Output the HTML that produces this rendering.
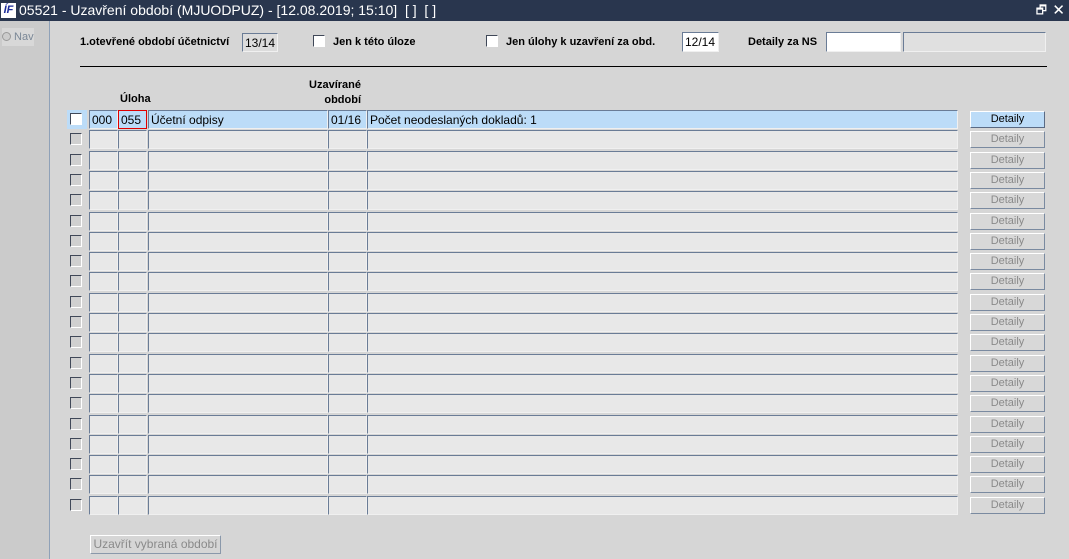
<!DOCTYPE html>
<html><head><meta charset="utf-8"><style>
*{box-sizing:border-box;margin:0;padding:0}
body{width:1069px;height:559px;overflow:hidden;background:#d6d6d6;font-family:"Liberation Sans",Arial,sans-serif;font-size:11px;color:#000;position:relative}
.a{position:absolute}
#title{left:0;top:0;width:1069px;height:21px;background:#29364e;color:#fff;font-size:14px;line-height:21px}
#left{left:0;top:21px;width:50px;height:538px;background:#cbcbcb;border-right:1px solid #8fa1b8}
.f{position:absolute;height:19px;background:#e8e8e8;border:1px solid;border-color:#6a7c96 #f0f0f0 #f0f0f0 #6a7c96;line-height:18px;padding-left:2px;white-space:nowrap;overflow:hidden;font-size:12px}
.s .f{background:#bcdcf8}
.cb{position:absolute;left:70px;width:12px;height:12px;background:#d0d0d0;border:1px solid;border-color:#404858 #fff #fff #404858;top:3px}
.s .cb{background:#fff}
.btn{position:absolute;left:970px;width:75px;height:17px;border:1px solid;border-color:#fff #7a8aa0 #7a8aa0 #fff;background:#d8d8d8;color:#8a8a8a;text-align:center;line-height:15px;top:1px}
.s .btn{background:#bcdcf8;color:#000;border-color:#fff #5a6a84 #5a6a84 #fff}
.r{position:absolute;left:0;width:1069px;height:20px}
.b{font-weight:bold}
</style></head><body>
<div id="title" class="a"><span style="position:absolute;left:1px;top:3px;width:15px;height:15px;background:#fff;color:#1a2a9a;font-size:11px;font-weight:bold;font-style:italic;line-height:15px;text-align:center">ÍF</span><span style="position:absolute;left:19px">05521 - Uzavření období (MJUODPUZ) - [12.08.2019; 15:10]&nbsp; [ ]&nbsp; [ ]</span><span style="position:absolute;right:22px;font-size:12px">🗗</span><span style="position:absolute;right:4px;font-size:15px">✕</span></div>
<div id="left" class="a"><div class="a" style="left:2px;top:7px;width:32px;height:18px;background:#d8d8d8;color:#7a8796;font-size:11px;line-height:18px"><span style="display:inline-block;width:9px;height:9px;border-radius:50%;background:#ccc;border:1px solid #999;vertical-align:-1px"></span> Nav</div></div>

<div class="a b" style="left:80px;top:36px">1.otevřené období účetnictví</div>
<div class="f" style="left:242px;top:33px;width:36px;background:#dcdcdc">13/14</div>
<div class="a" style="left:313px;top:35px;width:12px;height:12px;background:#fff;border:1px solid;border-color:#404858 #fff #fff #404858"></div>
<div class="a b" style="left:333px;top:36px">Jen k této úloze</div>
<div class="a" style="left:486px;top:35px;width:12px;height:12px;background:#fff;border:1px solid;border-color:#404858 #fff #fff #404858"></div>
<div class="a b" style="left:506px;top:36px">Jen úlohy k uzavření za obd.</div>
<div class="f" style="left:682px;top:32px;width:37px;height:20px;background:#fff">12/14</div>
<div class="a b" style="left:748px;top:36px">Detaily za NS</div>
<div class="f" style="left:826px;top:32px;width:75px;height:20px;background:#fff"></div>
<div class="f" style="left:903px;top:32px;width:143px;height:20px;background:#e0e0e0"></div>
<div class="a" style="left:80px;top:66px;width:967px;height:1px;background:#000"></div>
<div class="a b" style="left:120px;top:93px">Úloha</div>
<div class="a b" style="left:300px;top:78px;width:61px;text-align:right;line-height:15px">Uzavírané<br>období</div>

<div class="r s" style="top:110px"><div class="a" style="left:67px;top:0;width:20px;height:19px;background:#bcdcf8"></div><div class="cb"></div><div class="f" style="left:89px;width:29px">000</div><div class="f" style="left:118px;width:29px;border:1px solid #e00000">055</div><div class="f" style="left:148px;width:180px">Účetní odpisy</div><div class="f" style="left:328px;width:39px">01/16</div><div class="f" style="left:367px;width:591px">Počet neodeslaných dokladů: 1</div><div class="btn">Detaily</div></div>
<div class="r" style="top:130px"><div class="cb"></div><div class="f" style="left:89px;width:29px"></div><div class="f" style="left:118px;width:29px"></div><div class="f" style="left:148px;width:180px"></div><div class="f" style="left:328px;width:39px"></div><div class="f" style="left:367px;width:591px"></div><div class="btn">Detaily</div></div>
<div class="r" style="top:151px"><div class="cb"></div><div class="f" style="left:89px;width:29px"></div><div class="f" style="left:118px;width:29px"></div><div class="f" style="left:148px;width:180px"></div><div class="f" style="left:328px;width:39px"></div><div class="f" style="left:367px;width:591px"></div><div class="btn">Detaily</div></div>
<div class="r" style="top:171px"><div class="cb"></div><div class="f" style="left:89px;width:29px"></div><div class="f" style="left:118px;width:29px"></div><div class="f" style="left:148px;width:180px"></div><div class="f" style="left:328px;width:39px"></div><div class="f" style="left:367px;width:591px"></div><div class="btn">Detaily</div></div>
<div class="r" style="top:191px"><div class="cb"></div><div class="f" style="left:89px;width:29px"></div><div class="f" style="left:118px;width:29px"></div><div class="f" style="left:148px;width:180px"></div><div class="f" style="left:328px;width:39px"></div><div class="f" style="left:367px;width:591px"></div><div class="btn">Detaily</div></div>
<div class="r" style="top:212px"><div class="cb"></div><div class="f" style="left:89px;width:29px"></div><div class="f" style="left:118px;width:29px"></div><div class="f" style="left:148px;width:180px"></div><div class="f" style="left:328px;width:39px"></div><div class="f" style="left:367px;width:591px"></div><div class="btn">Detaily</div></div>
<div class="r" style="top:232px"><div class="cb"></div><div class="f" style="left:89px;width:29px"></div><div class="f" style="left:118px;width:29px"></div><div class="f" style="left:148px;width:180px"></div><div class="f" style="left:328px;width:39px"></div><div class="f" style="left:367px;width:591px"></div><div class="btn">Detaily</div></div>
<div class="r" style="top:252px"><div class="cb"></div><div class="f" style="left:89px;width:29px"></div><div class="f" style="left:118px;width:29px"></div><div class="f" style="left:148px;width:180px"></div><div class="f" style="left:328px;width:39px"></div><div class="f" style="left:367px;width:591px"></div><div class="btn">Detaily</div></div>
<div class="r" style="top:272px"><div class="cb"></div><div class="f" style="left:89px;width:29px"></div><div class="f" style="left:118px;width:29px"></div><div class="f" style="left:148px;width:180px"></div><div class="f" style="left:328px;width:39px"></div><div class="f" style="left:367px;width:591px"></div><div class="btn">Detaily</div></div>
<div class="r" style="top:293px"><div class="cb"></div><div class="f" style="left:89px;width:29px"></div><div class="f" style="left:118px;width:29px"></div><div class="f" style="left:148px;width:180px"></div><div class="f" style="left:328px;width:39px"></div><div class="f" style="left:367px;width:591px"></div><div class="btn">Detaily</div></div>
<div class="r" style="top:313px"><div class="cb"></div><div class="f" style="left:89px;width:29px"></div><div class="f" style="left:118px;width:29px"></div><div class="f" style="left:148px;width:180px"></div><div class="f" style="left:328px;width:39px"></div><div class="f" style="left:367px;width:591px"></div><div class="btn">Detaily</div></div>
<div class="r" style="top:333px"><div class="cb"></div><div class="f" style="left:89px;width:29px"></div><div class="f" style="left:118px;width:29px"></div><div class="f" style="left:148px;width:180px"></div><div class="f" style="left:328px;width:39px"></div><div class="f" style="left:367px;width:591px"></div><div class="btn">Detaily</div></div>
<div class="r" style="top:354px"><div class="cb"></div><div class="f" style="left:89px;width:29px"></div><div class="f" style="left:118px;width:29px"></div><div class="f" style="left:148px;width:180px"></div><div class="f" style="left:328px;width:39px"></div><div class="f" style="left:367px;width:591px"></div><div class="btn">Detaily</div></div>
<div class="r" style="top:374px"><div class="cb"></div><div class="f" style="left:89px;width:29px"></div><div class="f" style="left:118px;width:29px"></div><div class="f" style="left:148px;width:180px"></div><div class="f" style="left:328px;width:39px"></div><div class="f" style="left:367px;width:591px"></div><div class="btn">Detaily</div></div>
<div class="r" style="top:394px"><div class="cb"></div><div class="f" style="left:89px;width:29px"></div><div class="f" style="left:118px;width:29px"></div><div class="f" style="left:148px;width:180px"></div><div class="f" style="left:328px;width:39px"></div><div class="f" style="left:367px;width:591px"></div><div class="btn">Detaily</div></div>
<div class="r" style="top:415px"><div class="cb"></div><div class="f" style="left:89px;width:29px"></div><div class="f" style="left:118px;width:29px"></div><div class="f" style="left:148px;width:180px"></div><div class="f" style="left:328px;width:39px"></div><div class="f" style="left:367px;width:591px"></div><div class="btn">Detaily</div></div>
<div class="r" style="top:435px"><div class="cb"></div><div class="f" style="left:89px;width:29px"></div><div class="f" style="left:118px;width:29px"></div><div class="f" style="left:148px;width:180px"></div><div class="f" style="left:328px;width:39px"></div><div class="f" style="left:367px;width:591px"></div><div class="btn">Detaily</div></div>
<div class="r" style="top:455px"><div class="cb"></div><div class="f" style="left:89px;width:29px"></div><div class="f" style="left:118px;width:29px"></div><div class="f" style="left:148px;width:180px"></div><div class="f" style="left:328px;width:39px"></div><div class="f" style="left:367px;width:591px"></div><div class="btn">Detaily</div></div>
<div class="r" style="top:475px"><div class="cb"></div><div class="f" style="left:89px;width:29px"></div><div class="f" style="left:118px;width:29px"></div><div class="f" style="left:148px;width:180px"></div><div class="f" style="left:328px;width:39px"></div><div class="f" style="left:367px;width:591px"></div><div class="btn">Detaily</div></div>
<div class="r" style="top:496px"><div class="cb"></div><div class="f" style="left:89px;width:29px"></div><div class="f" style="left:118px;width:29px"></div><div class="f" style="left:148px;width:180px"></div><div class="f" style="left:328px;width:39px"></div><div class="f" style="left:367px;width:591px"></div><div class="btn">Detaily</div></div>

<div class="a" style="left:90px;top:535px;width:131px;height:19px;border:1px solid;border-color:#fff #8a98aa #8a98aa #fff;color:#8a8a8a;text-align:center;line-height:17px;font-size:12px">Uzavřít vybraná období</div>
</body></html>
